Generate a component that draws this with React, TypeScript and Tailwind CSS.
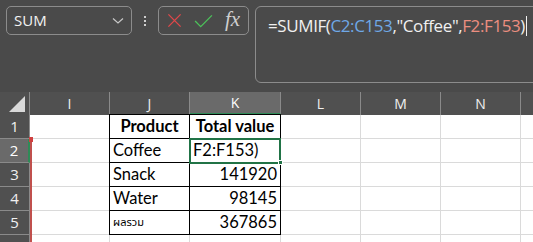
import React from "react";

const cols = ["I", "J", "K", "L", "M", "N", ""];
const colW = [80, 80, 91, 80, 80, 80, 20];

type Cell = { text?: string; bold?: boolean; align?: "left" | "center" | "right"; thai?: boolean };

const data: Record<number, Record<string, Cell>> = {
  1: { J: { text: "Product", bold: true, align: "center" }, K: { text: "Total value", bold: true, align: "center" } },
  2: { J: { text: "Coffee" }, K: { text: "F2:F153)" } },
  3: { J: { text: "Snack" }, K: { text: "141920", align: "right" } },
  4: { J: { text: "Water" }, K: { text: "98145", align: "right" } },
  5: { J: { text: "ผลรวม", thai: true }, K: { text: "367865", align: "right" } },
  6: {},
};

export default function App() {
  const rows = [1, 2, 3, 4, 5, 6];
  return (
    <div className="w-[533px] h-[242px] overflow-hidden bg-[#4a4a4a] relative" style={{ fontFamily: "'Open Sans', sans-serif" }}>
      {/* top bar */}
      <div className="h-[92px] flex items-start pt-[6px] pl-[6px] overflow-hidden">
        <div className="shrink-0 w-[126px] h-[29px] rounded-[5px] border border-[#8c8c8c] flex items-center pl-[7px] pr-[7px] justify-between">
          <span className="text-[#f2f2f2] text-[15px] leading-none">SUM</span>
          <svg width="12" height="8" viewBox="0 0 12 8" className="mt-[1px]">
            <path d="M1 1.5 L6 6 L11 1.5" fill="none" stroke="#c8c8c8" strokeWidth="1.2" />
          </svg>
        </div>
        <div className="shrink-0 w-[26px] h-[29px] flex flex-col items-center justify-center gap-[2px]">
          <div className="w-[2px] h-[2px] bg-[#cfcfcf]" />
          <div className="w-[2px] h-[2px] bg-[#cfcfcf]" />
          <div className="w-[2px] h-[2px] bg-[#cfcfcf]" />
        </div>
        <div className="shrink-0 w-[91px] h-[29px] rounded-[5px] border border-[#8c8c8c] flex items-center pl-[8px] gap-[12px]">
          <svg width="15" height="15" viewBox="0 0 16 16">
            <path d="M1.5 1.5 L14.5 14.5 M14.5 1.5 L1.5 14.5" stroke="#e0484a" strokeWidth="1.4" fill="none" />
          </svg>
          <svg width="19" height="14" viewBox="0 0 20 15">
            <path d="M1 7.5 L7 13.5 L19 1.5" stroke="#4cc25a" strokeWidth="1.4" fill="none" />
          </svg>
          <span className="text-[#cfcfcf] text-[21px] italic leading-none -mt-[3px]" style={{ fontFamily: "'Liberation Serif', serif" }}>fx</span>
        </div>
        <div className="shrink-0 ml-[6px] w-[300px] h-[77px] rounded-[6px] border border-[#8c8c8c] pl-[12px] pt-[8px]">
          <div className="text-[17px] leading-[22px] text-[#f0f0f0] flex items-center whitespace-nowrap" style={{ fontFamily: "'Open Sans', sans-serif", letterSpacing: "-0.4px" }}>
            <span>=SUMIF(</span>
            <span className="text-[#6fa8e6]">C2:C153</span>
            <span>,"Coffee",</span>
            <span className="text-[#ec8e80]">F2:F153</span>
            <span>)</span>
            <span className="inline-block w-[1px] h-[20px] bg-[#f0f0f0] ml-[1px]" />
          </div>
        </div>
      </div>

      {/* grid */}
      <div className="flex flex-col">
        <div className="flex h-[23px] bg-[#505050]">
          <div className="w-[30px] min-w-[30px] h-full border-r border-[#8a8a8a] flex items-end justify-end pr-[4px] pb-[3px]">
            <svg width="16" height="16" viewBox="0 0 16 16">
              <path d="M16 0 L16 16 L0 16 Z" fill="#d9d9d9" />
            </svg>
          </div>
          {cols.map((c, i) => (
            <div
              key={i}
              className={`h-full flex items-center justify-center text-[14px] border-r ${
                c === "K" ? "bg-[#6a6a6a] border-[#8a8a8a] border-b-2 border-b-[#2e8b57] text-[#ffffff]" : "border-[#8a8a8a] text-[#f0f0f0]"
              }`}
              style={{ width: colW[i], minWidth: colW[i] }}
            >
              {c}
            </div>
          ))}
        </div>
        {rows.map((r) => (
          <div key={r} className="flex h-[24px]">
            <div
              className={`w-[30px] min-w-[30px] h-full flex items-center justify-center text-[15px] border-b border-[#8a8a8a] ${
                r === 2 ? "bg-[#6a6a6a] border-r-2 border-r-[#2e8b57] text-white" : "bg-[#505050] border-r border-r-[#8a8a8a] text-[#f0f0f0]"
              }`}
            >
              {r <= 5 ? r : ""}
            </div>
            {cols.map((c, i) => {
              const cell = data[r]?.[c];
              const inTable = r <= 5 && (c === "J" || c === "K");
              const align = cell?.align ?? "left";
              return (
                <div
                  key={i}
                  className={`h-full bg-white flex items-center border-r border-b ${
                    inTable ? "border-black" : "border-[#dadada]"
                  } ${align === "center" ? "justify-center" : align === "right" ? "justify-end pr-[3px]" : "justify-start pl-[3px]"}`}
                  style={{ width: colW[i], minWidth: colW[i] }}
                >
                  {cell?.text && (
                    <span
                      className={`text-black leading-none whitespace-nowrap ${cell.bold ? "font-bold" : ""} ${cell.thai ? "text-[11px]" : "text-[16.5px]"}`}
                      style={{ fontFamily: cell.thai ? "'Noto Sans Thai', 'Noto Sans', 'DejaVu Sans', sans-serif" : "Lato, 'Open Sans', sans-serif" }}
                    >
                      {cell.text}
                    </span>
                  )}
                </div>
              );
            })}
          </div>
        ))}
      </div>

      <div className="absolute left-[109px] top-[115px] w-[1px] h-[120px] bg-black" />
      <div className="absolute left-[109px] top-[114px] w-[172px] h-[1px] bg-black" />
      <div className="absolute left-[189px] top-[138px] w-[92px] h-[26px] border-2 border-[#217346]" />
      <div className="absolute left-[278px] top-[160px] w-[5px] h-[5px] bg-[#217346] border border-white" />
      <div className="absolute left-[29px] top-[137px] w-[4px] h-[5px] bg-[#d04040]" />
      <div className="absolute left-[30px] top-[142px] w-[2px] h-[100px] bg-[#c0504d]" />
    </div>
  );
}
